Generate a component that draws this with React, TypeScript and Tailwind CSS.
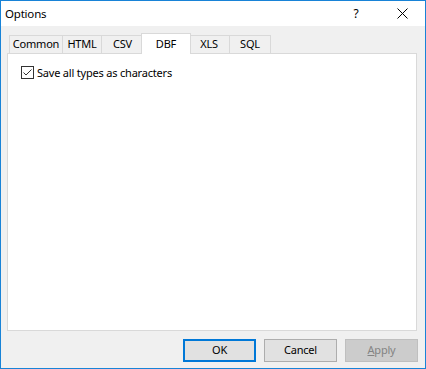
import React from "react";

const font = { fontFamily: '"Noto Sans", "Segoe UI", sans-serif' };

function Tab({ label, w, selected, ml }: { label: string; w: string; selected?: boolean; ml: string }) {
  if (selected) {
    return (
      <div
        className={`relative z-10 ${w} ${ml} h-[21px] -mb-px bg-white border border-b-0 border-[#d9d9d9] flex items-start justify-center pt-[2px] text-[11px] tracking-[-0.2px] text-black`}
      >
        {label}
      </div>
    );
  }
  return (
    <div
      className={`${w} ${ml} h-[18px] bg-[#f0f0f0] border border-b-0 border-[#d9d9d9] flex items-center justify-center text-[11px] tracking-[-0.2px] text-black`}
    >
      {label}
    </div>
  );
}

export default function App() {
  return (
    <div
      className="w-[426px] h-[369px] border border-[#1883d7] bg-[#f0f0f0] flex flex-col overflow-hidden"
      style={font}
    >
      {/* title bar */}
      <div className="h-[25px] bg-white flex items-center shrink-0">
        <div className="pl-[4px] text-[11.5px] tracking-[-0.2px] text-black flex-1 leading-none">Options</div>
        <div className="w-[46px] h-full flex items-center justify-center text-[12px] text-black">?</div>
        <div className="w-[46px] h-full flex items-center justify-center">
          <svg width="11" height="11" viewBox="0 0 11 11">
            <path d="M0.5 0.5 L10.5 10.5 M10.5 0.5 L0.5 10.5" stroke="#000" strokeWidth="1" />
          </svg>
        </div>
      </div>

      {/* body */}
      <div className="flex-1 flex flex-col pt-[7px] pl-[6px] pr-[7px] pb-[6px]">
        <div className="flex items-end h-[20px] pl-[2px] shrink-0">
          <Tab label="Common" w="w-[54px]" ml="ml-0" />
          <Tab label="HTML" w="w-[40px]" ml="-ml-px" />
          <Tab label="CSV" w="w-[43px]" ml="-ml-px" />
          <Tab label="DBF" w="w-[50px]" ml="-ml-[3px]" selected />
          <Tab label="XLS" w="w-[42px]" ml="-ml-[3px]" />
          <Tab label="SQL" w="w-[42px]" ml="-ml-px" />
        </div>
        <div className="h-[278px] bg-white border border-[#d9d9d9] mr-px pl-[13px] pt-[12px] shrink-0">
          <label className="flex items-center text-[11px] tracking-[-0.2px] text-black">
            <span className="w-[13px] h-[13px] border border-[#333333] bg-white flex items-center justify-center">
              <svg width="11" height="11" viewBox="0 0 11 11">
                <path d="M1.5 5.5 L4 8 L9.5 2.5" stroke="#333" strokeWidth="1" fill="none" />
              </svg>
            </span>
            <span className="ml-[3px] leading-none">Save all types as characters</span>
          </label>
        </div>
        <div className="flex justify-end gap-[8px] mt-[8px]">
          <button className="w-[73px] h-[23px] bg-[#e1e1e1] border-2 border-[#0078d7] text-[11px] tracking-[-0.2px] text-black flex items-center justify-center">
            OK
          </button>
          <button className="w-[73px] h-[23px] bg-[#e1e1e1] border border-[#adadad] text-[11px] tracking-[-0.2px] text-black flex items-center justify-center">
            Cancel
          </button>
          <button className="w-[73px] h-[23px] bg-[#cccccc] border border-[#bfbfbf] text-[11px] tracking-[-0.2px] text-[#838383] flex items-center justify-center">
            <span><span className="underline">A</span>pply</span>
          </button>
        </div>
      </div>
    </div>
  );
}
